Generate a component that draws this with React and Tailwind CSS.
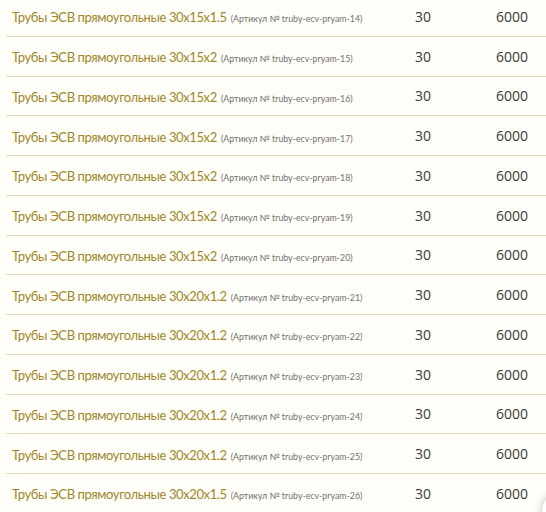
import React from "react";

const rows = [
  ["30x15x1.5", 14],
  ["30x15x2", 15],
  ["30x15x2", 16],
  ["30x15x2", 17],
  ["30x15x2", 18],
  ["30x15x2", 19],
  ["30x15x2", 20],
  ["30x20x1.2", 21],
  ["30x20x1.2", 22],
  ["30x20x1.2", 23],
  ["30x20x1.2", 24],
  ["30x20x1.2", 25],
  ["30x20x1.5", 26],
];

export default function App() {
  return (
    <div className="w-[546px] h-[512px] overflow-hidden bg-[#fffef9] relative">
      <div className="ml-[6px] mt-[-3px]">
        {rows.map(([size, n], i) => (
          <div
            key={i}
            className="flex items-center h-[39.75px] border-b border-[#e3dbb8]"
          >
            <div className="flex-1 min-w-0 overflow-hidden pl-[6px] whitespace-nowrap">
              <span className="text-[#9d8628] text-[13px] tracking-[-0.4px] font-['Lato',sans-serif]">
                Трубы ЭСВ прямоугольные {size}
              </span>{" "}
              <span className="text-[#707070] text-[8.8px] font-['Lato',sans-serif]">
                (Артикул № truby-ecv-pryam-{n})
              </span>
            </div>
            <div className="w-[40px] shrink-0 text-center text-[14px] text-[#3a3a3a] font-['Open_Sans',sans-serif] mr-[44px]">
              30
            </div>
            <div className="w-[50px] shrink-0 text-center text-[14px] text-[#3a3a3a] font-['Open_Sans',sans-serif] mr-[9px]">
              6000
            </div>
          </div>
        ))}
      </div>
      <div className="absolute left-[542px] top-[492px] w-[40px] h-[40px] rounded-full bg-white shadow-[0_0_10px_rgba(0,0,0,0.25)]" />
    </div>
  );
}
